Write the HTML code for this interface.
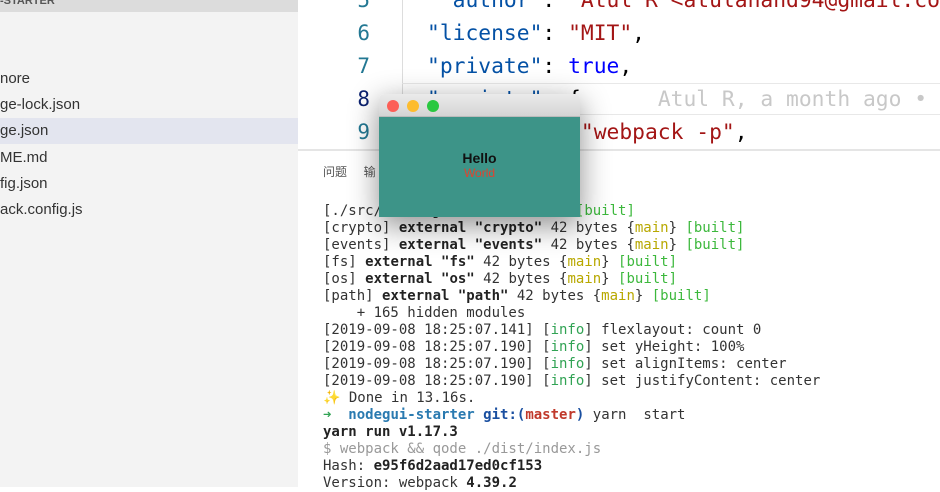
<!DOCTYPE html>
<html><head><meta charset="utf-8"><style>
*{margin:0;padding:0;box-sizing:border-box}
body{width:940px;height:487px;overflow:hidden;background:#fff;position:relative;font-family:"Liberation Sans","Noto Sans CJK SC",sans-serif}
#side{position:absolute;left:0;top:0;width:298px;height:487px;background:#f3f3f3}
#side .hdr{position:absolute;top:0;left:0;width:298px;height:12px;background:#dcdcdc;font-size:11px;font-weight:bold;color:#555;line-height:2px;padding-left:0}
.f{position:absolute;left:0;font-size:15px;color:#333;height:26px;line-height:26px;width:298px}
.sel{background:#e3e5ef}
.ln{position:absolute;left:330px;width:40px;text-align:right;font-family:"DejaVu Sans Mono",monospace;font-size:21px;color:#237893;line-height:33px}
.code{position:absolute;left:427px;font-family:"DejaVu Sans Mono",monospace;font-size:21.3px;line-height:33px;white-space:pre;color:#000}
.k{color:#0451a5}.s{color:#a31515}.b{color:#0000ff}
#term{position:absolute;left:323px;top:203px;font-family:"DejaVu Sans Mono",monospace;font-size:14px;line-height:17px;white-space:pre;color:#333}
.y{color:#b8a800}.g{color:#3cb83c}.gr{color:#31a354}.bd{font-weight:bold;color:#222}
#win{position:absolute;left:379px;top:94px;width:201px;height:123px;box-shadow:0 8px 30px rgba(0,0,0,.45);border-radius:5px 5px 0 0;overflow:hidden}
#tb{height:23px;background:linear-gradient(#ebebeb,#d4d4d4);border-bottom:1px solid #bbb;position:relative}
.dot{position:absolute;top:6px;width:12px;height:12px;border-radius:50%}
#bd{height:100px;background:#3d9488;text-align:center;padding-top:33px}
</style></head><body>
<div id="side">
<div class="hdr">-STARTER</div>
<div class="f" style="top:66px">nore</div>
<div class="f" style="top:92px">ge-lock.json</div>
<div class="f sel" style="top:118px">ge.json</div>
<div class="f" style="top:145px">ME.md</div>
<div class="f" style="top:171px">fig.json</div>
<div class="f" style="top:197px">ack.config.js</div>
</div>
<div style="position:absolute;left:402px;top:0;width:1px;height:150px;background:#ddd"></div>
<div style="position:absolute;left:402px;top:83px;width:538px;height:32px;border-top:1px solid #e8e8e8;border-bottom:1px solid #e8e8e8"></div>
<div class="ln" style="top:-16px">5</div>
<div class="ln" style="top:17px">6</div>
<div class="ln" style="top:50px">7</div>
<div class="ln" style="top:83px;color:#0b216f">8</div>
<div class="ln" style="top:116px">9</div>
<div class="code" style="top:-16px"> <span class="k">"author"</span>: <span class="s">"Atul R &lt;atulanand94@gmail.com</span></div>
<div class="code" style="top:17px"><span class="k">"license"</span>: <span class="s">"MIT"</span>,</div>
<div class="code" style="top:50px"><span class="k">"private"</span>: <span class="b">true</span>,</div>
<div class="code" style="top:83px"><span class="k">"scripts"</span>: {      <span style="color:#c8c8c8">Atul R, a month ago •</span></div>
<div class="code" style="top:116px">            <span class="s">"webpack -p"</span>,</div>
<div style="position:absolute;left:298px;top:149px;width:642px;height:2px;background:#e5e5e5"></div>
<div style="position:absolute;left:323px;top:163px;font-size:12px;color:#555">问题 &nbsp; &nbsp; 输</div>
<div id="term">[./src/<span class="bd">index.js</span>] 1 KiB {<span class="y">main</span>} <span class="g">[built]</span>
[crypto] <span class="bd">external "crypto"</span> 42 bytes {<span class="y">main</span>} <span class="g">[built]</span>
[events] <span class="bd">external "events"</span> 42 bytes {<span class="y">main</span>} <span class="g">[built]</span>
[fs] <span class="bd">external "fs"</span> 42 bytes {<span class="y">main</span>} <span class="g">[built]</span>
[os] <span class="bd">external "os"</span> 42 bytes {<span class="y">main</span>} <span class="g">[built]</span>
[path] <span class="bd">external "path"</span> 42 bytes {<span class="y">main</span>} <span class="g">[built]</span>
    + 165 hidden modules
[2019-09-08 18:25:07.141] [<span class="gr">info</span>] flexlayout: count 0
[2019-09-08 18:25:07.190] [<span class="gr">info</span>] set yHeight: 100%
[2019-09-08 18:25:07.190] [<span class="gr">info</span>] set alignItems: center
[2019-09-08 18:25:07.190] [<span class="gr">info</span>] set justifyContent: center
<span class="y">✨</span> Done in 13.16s.
<span class="gr">➜</span>  <span style="color:#2a7ab0;font-weight:bold">nodegui-starter</span> <span style="color:#1a4fa0;font-weight:bold">git:(</span><span style="color:#c0392b;font-weight:bold">master</span><span style="color:#1a4fa0;font-weight:bold">)</span> yarn  start
<span class="bd">yarn run v1.17.3</span>
<span style="color:#999">$ webpack &amp;&amp; qode ./dist/index.js</span>
Hash: <span class="bd">e95f6d2aad17ed0cf153</span>
Version: webpack <span class="bd">4.39.2</span></div>
<div id="win">
<div id="tb"><div class="dot" style="left:8px;background:#fc5f57"></div><div class="dot" style="left:28px;background:#fdbc2e"></div><div class="dot" style="left:48px;background:#29c840"></div></div>
<div id="bd"><div style="font-weight:bold;font-size:14px;color:#111;line-height:16px">Hello</div><div style="font-size:12px;color:#e0432f;line-height:14px">World</div></div>
</div>
</body></html>
